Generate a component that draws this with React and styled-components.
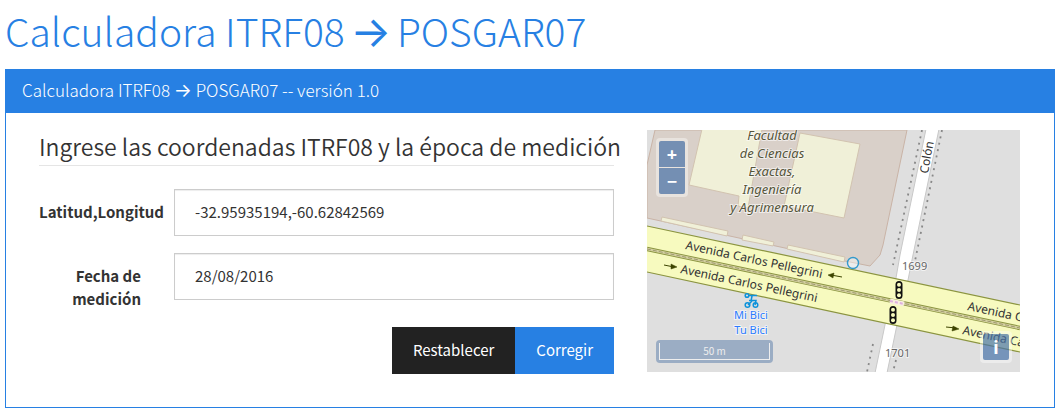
import React from "react";
import styled, { createGlobalStyle } from "styled-components";

const Global = createGlobalStyle`
  *, *::before, *::after { box-sizing: border-box; }
  body {
    margin: 0;
    background: #fff;
    color: #333;
    font: 15px/23px "Noto Sans CJK JP", "Noto Sans", sans-serif;
  }
`;

const Page = styled.main`
  padding: 5px 5px 3px;
`;

const Title = styled.h1`
  margin: 0 0 14px;
  color: #2780e3;
  font-size: 39px;
  font-weight: 200;
  line-height: 50px;
`;

const Arrow = styled.span`
  margin: 0 ${(p) => p.$tuck || 0}px;
  font-family: Inter, sans-serif;
  font-size: ${(p) => p.$size}px;
  font-weight: 400;
  line-height: 1;
`;

const Panel = styled.section`
  border: 1px solid #2780e3;
`;

const PanelHeading = styled.header`
  padding: 8px 16px 11px;
  background: #2780e3;
  color: #fff;
  font-size: 17px;
  font-weight: 300;
  line-height: 24px;
`;

const PanelBody = styled.div`
  display: grid;
  grid-template-columns: minmax(0, 575fr) minmax(0, 373fr);
  gap: 33px;
  align-items: start;
  padding: 17px 34px 33px 33px;
`;

const Form = styled.form`
  display: flex;
  flex-direction: column;
`;

const Legend = styled.h2`
  margin: 0 0 23px;
  padding-bottom: 2px;
  border-bottom: 1px solid #e5e5e5;
  font-size: 23px;
  font-weight: 350;
  line-height: 33px;
  white-space: nowrap;
`;

const Field = styled.div`
  display: flex;
  align-items: flex-start;
  margin-bottom: 17px;
`;

const Label = styled.label`
  flex: 0 0 135px;
  padding: 11px ${(p) => p.$inset || 0}px 0 0;
  font-weight: 700;
  text-align: ${(p) => (p.$inset ? "right" : "left")};
`;

const Input = styled.input`
  flex: 1;
  min-width: 0;
  height: 47px;
  padding: 9px 20px 11px;
  border: 1px solid #ccc;
  border-radius: 0;
  box-shadow: inset 0 1px 1px rgba(0, 0, 0, 0.075);
  background: #fff;
  color: #333;
  font: inherit;
`;

const Actions = styled.div`
  display: flex;
  justify-content: flex-end;
`;

const Button = styled.button`
  height: 47px;
  padding: 0 21px 2px;
  border: 0;
  background: ${(p) => (p.$primary ? "#2780e3" : "#222")};
  color: #fff;
  font: inherit;
`;

const MapBox = styled.div`
  position: relative;
  overflow: hidden;
  background: #dfdfdf;
`;

const MapDrawing = styled.svg`
  display: block;
  width: 100%;
  height: auto;
  font-family: "Noto Sans", sans-serif;
`;

const ControlFrame = styled.div`
  position: absolute;
  display: grid;
  gap: 1px;
  padding: 3px;
  border-radius: 4px;
  background: rgba(255, 255, 255, 0.4);
`;

const ZoomControl = styled(ControlFrame)`
  top: 8px;
  left: 9px;
`;

const InfoControl = styled(ControlFrame)`
  right: 8px;
  bottom: 9px;
`;

const MapButton = styled.button`
  width: 26px;
  height: 26px;
  padding: 0;
  border: 0;
  border-radius: ${(p) => p.$corners || "2px"};
  background: rgba(0, 60, 136, 0.5);
  color: #fff;
  font: 700 18px/26px "Noto Sans", sans-serif;
`;

const ScaleLine = styled.div`
  position: absolute;
  left: 9px;
  bottom: 9px;
  padding: 3px;
  border-radius: 4px;
  background: rgba(0, 60, 136, 0.3);
`;

const ScaleBar = styled.div`
  width: 111px;
  height: 17px;
  border: 1px solid #eee;
  border-top: 0;
  color: #eee;
  font-size: 10px;
  line-height: 15px;
  text-align: center;
`;

function Signal({ x, y }) {
  return (
    <g transform={`translate(${x} ${y})`}>
      <rect x="-3.500" y="-9" width="7" height="18" rx="3.500" fill="#111" />
      <g fill="#f7fabf">
        <circle cy="-5.300" r="2" />
        <circle r="2" />
        <circle cy="5.300" r="2" />
      </g>
    </g>
  );
}

function StreetMap() {
  return (
    <MapDrawing viewBox="0 0 373 242" role="img" aria-label="Mapa">
      <rect width="373" height="242" fill="#dfdfdf" />
      <path d="M8 0H260L236 115L233 125L223 136L193 130L0 88V35Z" fill="#d9d0c9" stroke="#c9b3a6" />
      <g fill="#f0f0d8" stroke="#d2c3b0">
        <path d="M55 -1L42 55L92 66L91 76L101 78L115 -1Z" />
        <path d="M153 3L213 14L197 88L137 76Z" />
        <path d="M15 87L81 101L80 106L14 91Z" />
        <path d="M96 105L127 112L126 116L95 110Z" />
        <path d="M141 115L198 127L197 132L140 119Z" />
      </g>
      <g stroke="#c8c8c8">
        <path d="M279 -1H292L266 125L258 165H246L253 125Z" fill="#fff" />
        <path d="M239 190H251L240 243H228Z" fill="#fff" />
      </g>
      <path d="M0 96L373 175V222L0 142Z" fill="#f7fabf" />
      <path d="M0 96L373 175M0 142L373 222" fill="none" stroke="#8b9440" strokeWidth="1.2" />
      <path d="M0 119L373 198" fill="none" stroke="#8b9440" strokeWidth="4.400" />
      <path d="M0 119L373 198" fill="none" stroke="#d3d0a0" strokeWidth="2.600" />
      <path d="M0 119L373 198" fill="none" stroke="#a09a70" strokeWidth="1" strokeDasharray="4 2" />
      <path d="M243 171L257 174" stroke="#f7f0dd" strokeWidth="5" />
      <path d="M243 171L257 174" stroke="#dfb0e0" strokeWidth="2" strokeDasharray="3 2" />
      <g fill="none" stroke="#888" strokeWidth="1.800" strokeDasharray="2 4.500">
        <path d="M275 0L246 135" />
        <path d="M295 0L268 131" />
        <path d="M226 214L220 242" />
        <path d="M249 230L246 242" />
      </g>
      <g fill="#55553a" fontSize="13" fontStyle="italic" textAnchor="middle" stroke="#fff" strokeOpacity="0.6" strokeWidth="2" paintOrder="stroke">
        <text x="125" y="10">Facultad</text>
        <text x="125" y="28">de Ciencias</text>
        <text x="125" y="46">Exactas,</text>
        <text x="125" y="64">Ingeniería</text>
        <text x="125" y="82">y Agrimensura</text>
      </g>
      <g fill="#333" fontSize="12">
        <text transform="translate(38 119) rotate(12)">Avenida Carlos Pellegrini</text>
        <text transform="translate(33 143) rotate(12)">Avenida Carlos Pellegrini</text>
        <text transform="translate(320 180) rotate(12)">Avenida Carlos</text>
        <text transform="translate(315 204) rotate(12)">Avenida Carlos</text>
        <text transform="translate(281 44) rotate(-80)">Colón</text>
      </g>
      <g fill="#3d4400" stroke="#3d4400">
        <path d="M184 145L195 147" />
        <path d="M181 145L187 143L186 148Z" strokeWidth="0.500" />
        <path d="M17 135L27 137" />
        <path d="M30 137L24 134L24 139Z" strokeWidth="0.500" />
        <path d="M299 197L309 198" />
        <path d="M312 199L306 196L305 201Z" strokeWidth="0.500" />
      </g>
      <g fill="#666" fontSize="11" stroke="#fff" strokeOpacity="0.6" strokeWidth="2" paintOrder="stroke">
        <text x="255" y="140">1699</text>
        <text x="238" y="227">1701</text>
      </g>
      <circle cx="206" cy="133" r="5.500" fill="#fff" fillOpacity="0.400" stroke="#3399cc" strokeWidth="1.400" />
      <Signal x={252} y={160} />
      <Signal x={246} y={185} />
      <g fill="none" stroke="#0c92da" strokeWidth="1.500">
        <circle cx="100" cy="165.500" r="1.800" />
        <path d="M102 165.500H110M105 166L104 171M102 170.500H109L108 175" />
        <circle cx="100.500" cy="175" r="2.300" />
        <circle cx="108.500" cy="175" r="2.300" />
        <path d="M101 175L105 171" />
      </g>
      <g fill="#2b7bff" fontSize="11" textAnchor="middle" stroke="#fff" strokeOpacity="0.6" strokeWidth="2" paintOrder="stroke">
        <text x="104" y="189">Mi Bici</text>
        <text x="104" y="204">Tu Bici</text>
      </g>
    </MapDrawing>
  );
}

export default function App() {
  return (
    <>
      <Global />
      <Page>
        <Title>Calculadora ITRF08 <Arrow $size={43} $tuck={-3}>→</Arrow> POSGAR07</Title>
        <Panel>
          <PanelHeading>Calculadora ITRF08 <Arrow $size={19}>→</Arrow> POSGAR07 -- versión 1.0</PanelHeading>
          <PanelBody>
            <Form onSubmit={(e) => e.preventDefault()}>
              <Legend>Ingrese las coordenadas ITRF08 y la época de medición</Legend>
              <Field>
                <Label htmlFor="coords">Latitud,Longitud</Label>
                <Input id="coords" defaultValue="-32.95935194,-60.62842569" />
              </Field>
              <Field>
                <Label htmlFor="date" $inset={33}>Fecha de medición</Label>
                <Input id="date" defaultValue="28/08/2016" />
              </Field>
              <Actions>
                <Button type="reset">Restablecer</Button>
                <Button type="submit" $primary>Corregir</Button>
              </Actions>
            </Form>
            <MapBox>
              <StreetMap />
              <ZoomControl>
                <MapButton type="button" aria-label="Acercar" $corners="2px 2px 0 0">+</MapButton>
                <MapButton type="button" aria-label="Alejar" $corners="0 0 2px 2px">−</MapButton>
              </ZoomControl>
              <ScaleLine><ScaleBar>50 m</ScaleBar></ScaleLine>
              <InfoControl>
                <MapButton type="button" aria-label="Información">i</MapButton>
              </InfoControl>
            </MapBox>
          </PanelBody>
        </Panel>
      </Page>
    </>
  );
}
